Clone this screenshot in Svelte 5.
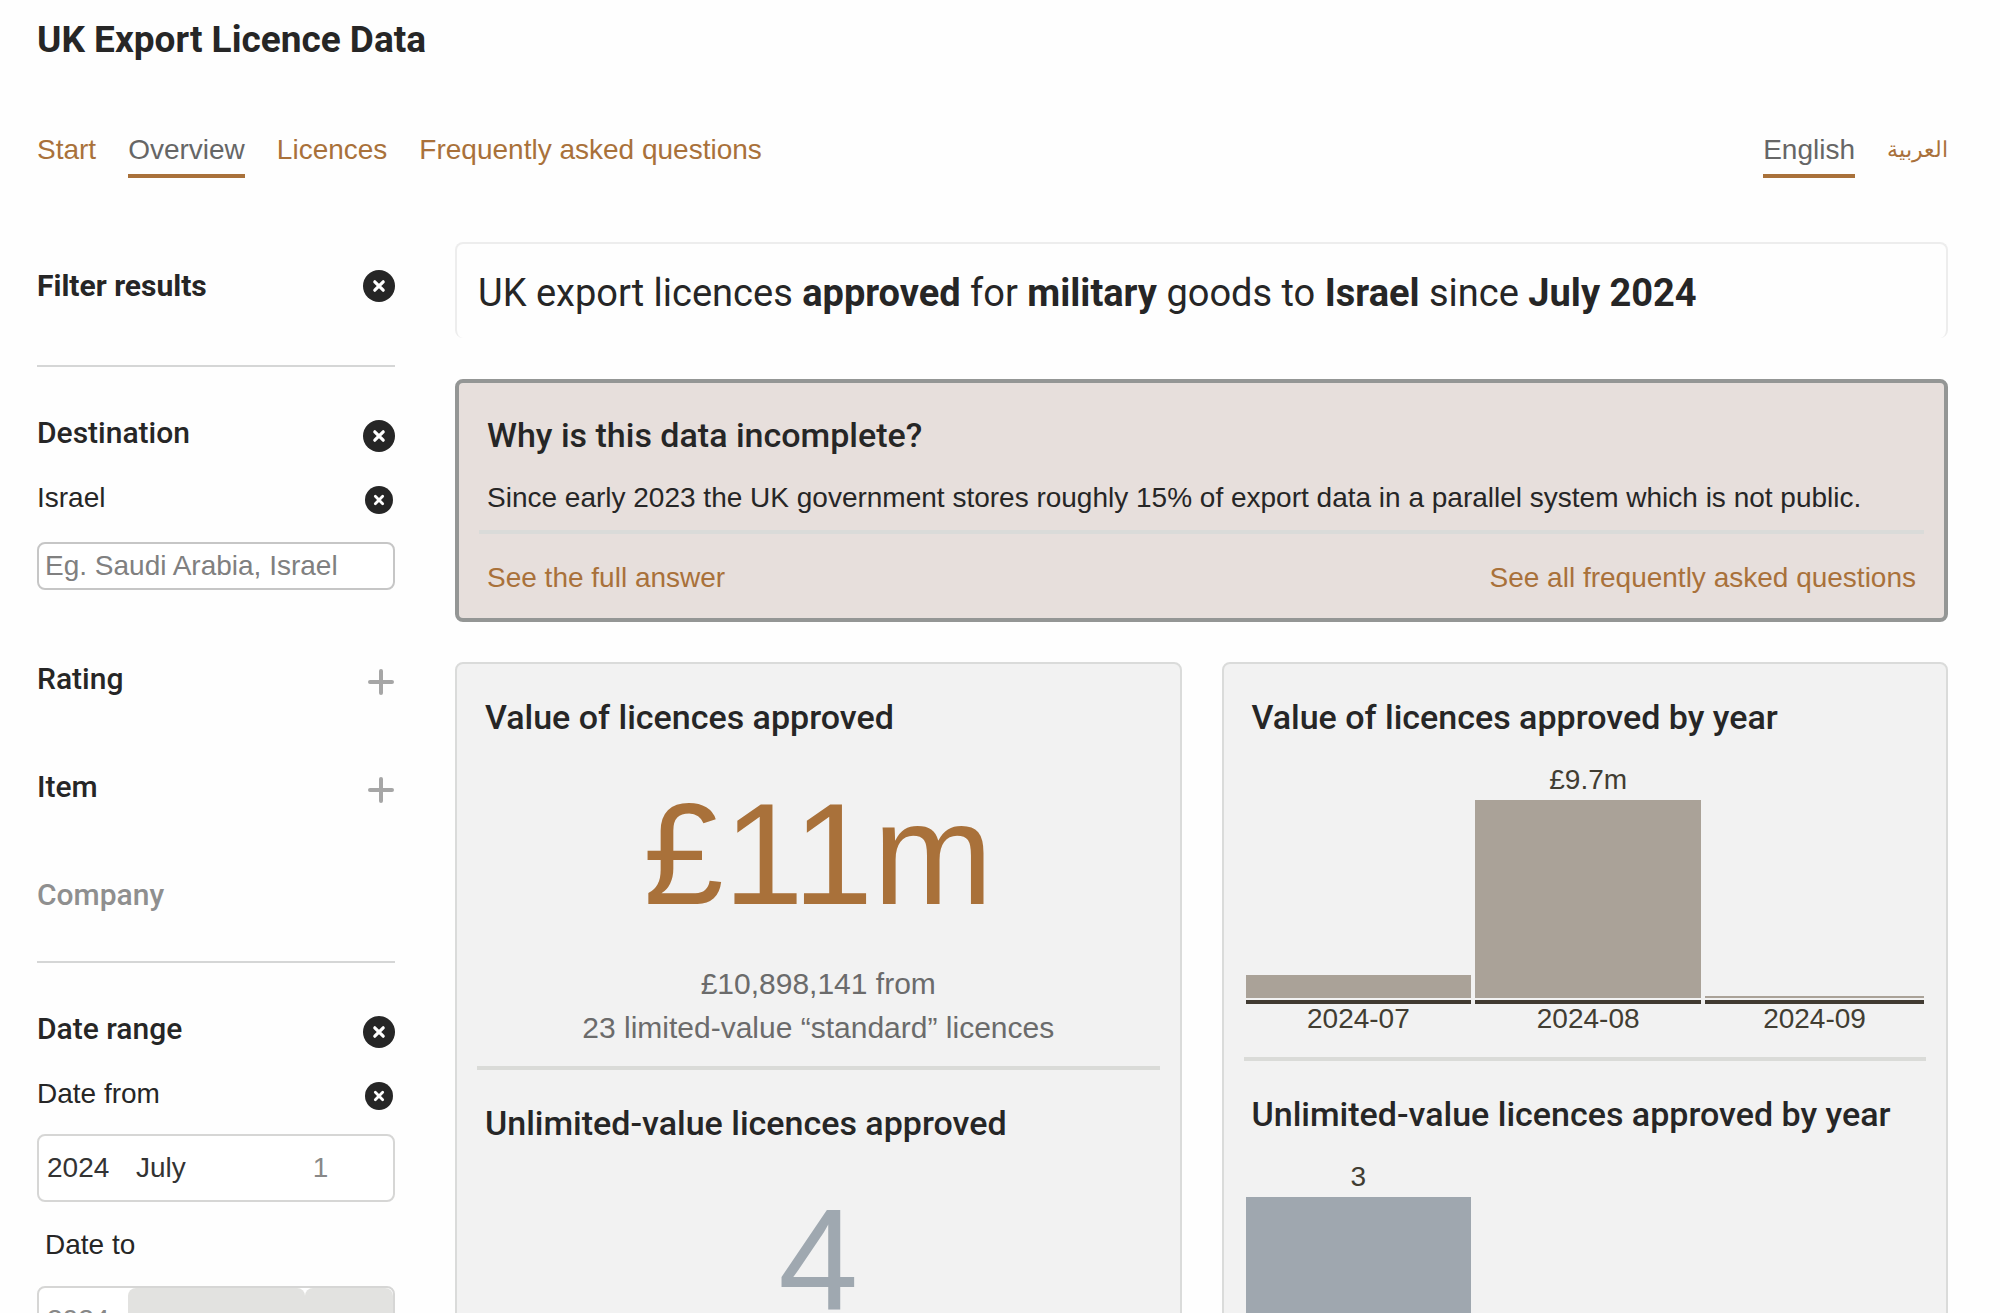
<script>
  const pages = ['Start', 'Overview', 'Licences', 'Frequently asked questions'];
  let page = $state('Overview');
  let destination = $state('');

  // amounts are in thousands of pounds
  const valueByMonth = [
    { month: '2024-07', amount: 1130 },
    { month: '2024-08', amount: 9700, label: '£9.7m' },
    { month: '2024-09', amount: 98 }
  ];

  const unlimitedByMonth = [
    { month: '2024-07', amount: 3, label: '3' },
    { month: '2024-08', amount: 0 },
    { month: '2024-09', amount: 0 }
  ];

  function share(rows, row) {
    const max = Math.max(...rows.map((r) => r.amount));
    return (row.amount / max) * 100;
  }
</script>

{#snippet clear(label, small = false)}
  <button class="clear" class:small aria-label={label}>
    <svg viewBox="0 0 32 32" aria-hidden="true">
      <circle cx="16" cy="16" r="16" fill="#262626" />
      <path d="M11.8 11.8 L20.2 20.2 M20.2 11.8 L11.8 20.2" stroke="#fff" stroke-width="3.2" stroke-linecap="round" />
    </svg>
  </button>
{/snippet}

{#snippet expand(label)}
  <button class="expand" aria-label={label}>
    <svg viewBox="0 0 26 26" aria-hidden="true">
      <path d="M13 2 V24 M2 13 H24" stroke="#a6a6a6" stroke-width="4" stroke-linecap="round" />
    </svg>
  </button>
{/snippet}

{#snippet chart(rows, kind)}
  <div class="chart">
    {#each rows as row (row.month)}
      <div class="column">
        <div class="track">
          {#if row.label}
            <span class="bar-label">{row.label}</span>
          {/if}
          <div class="area">
            <div class="bar {kind}" style="height: {share(rows, row)}%"></div>
          </div>
        </div>
        <div class="month">{row.month}</div>
      </div>
    {/each}
  </div>
{/snippet}

<div class="page">
  <header>
    <h1>UK Export Licence Data</h1>
    <div class="menus">
      <nav>
        {#each pages as name}
          <a href="#top" class:active={page === name} onclick={() => (page = name)}>{name}</a>
        {/each}
      </nav>
      <nav>
        <a href="#en" class="active">English</a>
        <a href="#ar" class="arabic" lang="ar">العربية</a>
      </nav>
    </div>
  </header>

  <div class="content">
    <aside>
      <div class="row title">
        <h2>Filter results</h2>
        {@render clear('Clear all filters')}
      </div>

      <section class="group">
        <div class="row">
          <h3>Destination</h3>
          {@render clear('Clear destinations')}
        </div>
        <div class="row value">
          <span>Israel</span>
          {@render clear('Remove Israel', true)}
        </div>
        <input
          type="text"
          placeholder="Eg. Saudi Arabia, Israel"
          aria-label="Destination"
          bind:value={destination}
        />
        <div class="row collapsed">
          <h3>Rating</h3>
          {@render expand('Show ratings')}
        </div>
        <div class="row collapsed">
          <h3>Item</h3>
          {@render expand('Show items')}
        </div>
        <div class="row collapsed disabled">
          <h3>Company</h3>
        </div>
      </section>

      <section class="group">
        <div class="row">
          <h3>Date range</h3>
          {@render clear('Clear date range')}
        </div>
        <div class="row value">
          <span>Date from</span>
          {@render clear('Clear date from', true)}
        </div>
        <div class="date">
          <select aria-label="From year"><option>2024</option></select>
          <select aria-label="From month"><option>July</option></select>
          <select class="unset" aria-label="From day"><option>1</option></select>
        </div>
        <div class="date-to">Date to</div>
        <div class="date">
          <select class="unset" aria-label="To year"><option>2024</option></select>
          <select aria-label="To month" disabled><option></option></select>
          <select aria-label="To day" disabled><option></option></select>
        </div>
      </section>
    </aside>

    <main>
      <div class="summary">
        UK export licences <b>approved</b> for <b>military</b> goods to <b>Israel</b> since <b>July 2024</b>
      </div>

      <section class="notice">
        <h2>Why is this data incomplete?</h2>
        <p>Since early 2023 the UK government stores roughly 15% of export data in a parallel system which is not public.</p>
        <div class="notice-links">
          <a href="#answer">See the full answer</a>
          <a href="#faq">See all frequently asked questions</a>
        </div>
      </section>

      <div class="cards">
        <div class="card">
          <section>
            <h2>Value of licences approved</h2>
            <div class="figure">£11m</div>
            <p>£10,898,141 from<br />23 limited-value “standard” licences</p>
          </section>
          <section>
            <h2>Unlimited-value licences approved</h2>
            <div class="figure blue">4</div>
          </section>
        </div>

        <div class="card">
          <section class="by-year">
            <h2>Value of licences approved by year</h2>
            {@render chart(valueByMonth, 'brown')}
          </section>
          <section class="by-year">
            <h2>Unlimited-value licences approved by year</h2>
            {@render chart(unlimitedByMonth, 'blue')}
          </section>
        </div>
      </div>
    </main>
  </div>
</div>

<style>
  :global(body) {
    background: #fefefe;
  }

  .page {
    box-sizing: border-box;
    height: 100vh;
    overflow: hidden;
    padding: 18px 52px 0 37px;
    font-family: 'Liberation Sans', Arial, sans-serif;
    font-size: 28px;
    line-height: 32px;
    color: #262626;
  }

  h1,
  h2,
  h3,
  p {
    margin: 0;
  }

  h1,
  h2,
  h3,
  .summary {
    font-family: Roboto, sans-serif;
  }

  h1 {
    font-size: 37px;
    line-height: 44px;
    font-weight: 700;
  }

  a {
    color: #a9713a;
    text-decoration: none;
  }

  .menus {
    display: flex;
    justify-content: space-between;
    margin-top: 72px;
  }

  nav {
    display: flex;
    gap: 32px;
  }

  nav a {
    padding-bottom: 8px;
    border-bottom: 4px solid transparent;
  }

  nav a.active {
    color: #666;
    border-color: #a9713a;
  }

  .arabic {
    font-size: 22px;
  }

  .content {
    display: grid;
    grid-template-columns: 358px minmax(0, 1fr);
    gap: 60px;
    margin-top: 64px;
  }

  /* filters */
  .row {
    display: flex;
    justify-content: space-between;
    align-items: flex-end;
    height: 36px;
  }

  .row.title {
    align-items: center;
    margin-top: 26px;
  }

  .row h2,
  .row h3 {
    align-self: flex-start;
    font-size: 30px;
    line-height: 34px;
    font-weight: 500;
  }

  .row.title h2 {
    align-self: center;
    font-weight: 700;
  }

  .row.value {
    height: 32px;
    margin: 30px 0 24px;
  }

  .row.collapsed {
    margin-top: 72px;
  }

  .row.disabled {
    color: #8f8f8f;
  }

  .group {
    margin-top: 47px;
    padding-top: 49px;
    border-top: 2px solid #d5d6d6;
  }

  .title + .group {
    margin-top: 61px;
  }

  button {
    display: flex;
    align-items: center;
    justify-content: center;
    padding: 0;
    border: none;
    background: none;
    cursor: pointer;
  }

  .clear {
    width: 32px;
    height: 32px;
  }

  .clear svg {
    width: 100%;
    height: 100%;
  }

  .clear.small {
    width: 28px;
    height: 28px;
    margin-right: 2px;
  }

  .expand {
    width: 28px;
    height: 32px;
  }

  .expand svg {
    width: 26px;
    height: 26px;
  }

  input {
    box-sizing: border-box;
    width: 100%;
    height: 48px;
    margin: 4px 0 0;
    padding: 0 6px;
    border: 2px solid #c6c6c6;
    border-radius: 8px;
    background: #fff;
    font: inherit;
    color: inherit;
  }

  input::placeholder {
    color: #808080;
  }

  .date {
    display: grid;
    grid-template-columns: 89px 2fr 1fr;
    height: 64px;
    border: 2px solid #d6d6d5;
    border-radius: 8px;
    background: #fff;
  }

  select {
    appearance: none;
    min-width: 0;
    padding: 0 8px;
    border: none;
    border-radius: 8px;
    background: none;
    font: inherit;
    color: #333;
  }

  select.unset {
    color: #888;
  }

  select:disabled {
    background: #e2e2e0;
    opacity: 1;
  }

  .date-to {
    margin: 27px 0 25px;
    padding-left: 8px;
  }

  /* results */
  .summary {
    height: 57px;
    padding: 27px 21px 10px;
    border: 2px solid #ededed;
    border-bottom: none;
    border-radius: 8px;
    font-size: 38px;
    line-height: 44px;
  }

  .notice {
    margin-top: 41px;
    padding: 32px 20px 24px;
    border: 4px solid #949695;
    border-radius: 8px;
    background: #e7dfdc;
  }

  .notice h2,
  .card h2 {
    padding: 0 8px;
    font-size: 34px;
    line-height: 40px;
    font-weight: 500;
  }

  .notice p {
    padding: 27px 8px 16px;
    border-bottom: 4px solid #dadbd9;
  }

  .notice-links {
    display: flex;
    justify-content: space-between;
    padding: 28px 8px 0;
  }

  .cards {
    display: grid;
    grid-template-columns: 1fr 1fr;
    gap: 40px;
    margin-top: 40px;
  }

  .card {
    padding: 0 20px;
    border: 2px solid #dadbda;
    border-radius: 8px;
    background: #f2f2f2;
  }

  .card section {
    padding: 33px 0 16px;
    border-bottom: 4px solid #dadbd8;
  }

  .card section.by-year {
    padding-bottom: 25px;
  }

  .figure {
    margin-top: 38px;
    font-size: 144px;
    line-height: 160px;
    text-align: center;
    color: #a9713a;
  }

  .figure.blue {
    color: #9fa8b0;
  }

  .card p {
    margin-top: 27px;
    font-size: 30px;
    line-height: 44px;
    text-align: center;
    color: #6b6b6b;
  }

  .chart {
    display: grid;
    grid-template-columns: 33fr 33fr 32fr;
    gap: 4px;
    margin: 27px 2px 0;
    text-align: center;
    color: #413d32;
  }

  .track {
    display: flex;
    flex-direction: column;
    justify-content: flex-end;
    height: 236px;
    border-bottom: 4px solid #413b32;
  }

  .bar-label {
    margin-bottom: 4px;
  }

  .area {
    display: flex;
    align-items: flex-end;
    height: 198px;
    margin-bottom: 2px;
  }

  .bar {
    width: 100%;
  }

  .bar.brown {
    background: #aaa298;
  }

  .bar.blue {
    background: #9fa7af;
  }

  .month {
    padding-top: 2px;
    line-height: 26px;
  }
</style>
